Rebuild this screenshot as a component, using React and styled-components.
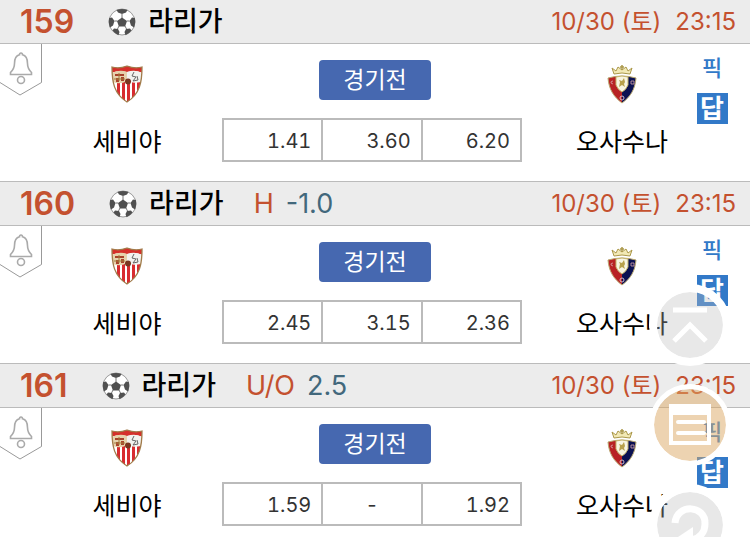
import React from 'react';
import styled, { createGlobalStyle } from 'styled-components';

const GlobalStyle = createGlobalStyle`
    * {
        box-sizing: border-box;
    }

    body {
        margin: 0;
        background-color: #fff;
        color: #000;
        font-family: Inter, "Noto Sans CJK KR", sans-serif;
        overflow-x: hidden;
    }

    button {
        padding: 0;
        font-family: inherit;
        cursor: pointer;
    }
`;

const Game = styled.section`
    &:not(:first-child) > header {
        border-top: 1px solid #bbb;
    }
`;

const GameHeader = styled.header`
    display: flex;
    align-items: center;
    padding: 0 14px 0 20px;
    background-color: #ececec;
    border-bottom: 1px solid #bbb;
    line-height: 43px;
    white-space: nowrap;
`;

const GameNumber = styled.span`
    margin-right: 34px;
    font-size: 32px;
    font-weight: 600;
    color: #c4512f;
`;

const League = styled.h2`
    margin: 0 0 0 12px;
    font-size: 27px;
    font-weight: 500;
    line-height: 43px;
`;

const Market = styled.span`
    margin-left: 30px;
    font-size: 27px;
    color: #c4512f;
`;

const Line = styled.span`
    margin-left: 12px;
    font-size: 27px;
    color: #42687c;
`;

const Kickoff = styled.time`
    display: flex;
    gap: 14px;
    margin-left: auto;
    font-size: 24px;
    color: #c4512f;
`;

const GameBody = styled.div`
    display: grid;
    grid-template-columns: 32px 190fr 306px 168fr 54px;
    height: 137px;
`;

const AlarmButton = styled.button`
    align-self: start;
    width: 42px;
    height: 53px;
    border: none;
    background: none;

    svg {
        display: block;
    }
`;

const Team = styled.div`
    display: flex;
    flex-direction: column;
    align-items: center;
    gap: 20px;
    padding-top: 20px;
    padding-left: ${(props) => (props.$away ? '20px' : '0')};
    font-size: 25px;
    line-height: 36px;
    white-space: nowrap;
`;

const Center = styled.div`
    display: flex;
    flex-direction: column;
    align-items: center;
    padding-top: 16px;
`;

const StatusButton = styled.button`
    width: 112px;
    height: 40px;
    border: none;
    border-radius: 4px;
    background-color: #4668b0;
    color: #fff;
    font-size: 23px;
    line-height: 40px;
`;

const Odds = styled.table`
    align-self: flex-start;
    width: 300px;
    margin-top: 18px;
    border-collapse: collapse;
    table-layout: fixed;

    td {
        height: 42px;
        padding: 2px 10px 0;
        border: 2px solid #bbb;
        color: #333;
        font-size: 20px;
        font-variant-numeric: tabular-nums;
        line-height: 24px;
        text-align: right;
    }

    td.empty {
        text-align: center;
    }
`;

const Picks = styled.div`
    display: flex;
    flex-direction: column;
    align-items: center;
    gap: 10px;
    width: 32px;
    padding-top: 9px;
`;

const PickButton = styled.button`
    border: none;
    background: none;
    color: #3279c8;
    font-size: 22px;
    font-weight: 500;
    line-height: 30px;
`;

const AnswerButton = styled.button`
    width: 31px;
    height: 31px;
    border: none;
    background-color: #3279c8;
    color: #fff;
    font-size: 26px;
    font-weight: 700;
    line-height: 30px;
`;

const FloatingMenu = styled.nav`
    position: fixed;
    top: 284px;
    right: 19px;
    display: flex;
    flex-direction: column;
    gap: 18px;
`;

const RoundButton = styled.button`
    width: 82px;
    height: 82px;
    border: ${(props) => (props.$accent ? '5px' : '8px')} solid #fff;
    border-radius: 50%;
    background-color: ${(props) => (props.$accent ? 'rgba(219, 167, 99, 0.5)' : 'rgba(189, 189, 189, 0.35)')};
    background-clip: padding-box;

    svg {
        display: block;
        margin: auto;
    }
`;

function BallIcon() {
    return (
        <svg width="28" height="28" viewBox="0 0 28 28" aria-hidden="true">
            <circle cx="14" cy="14" r="13" fill="#fff" stroke="#999" />
            <g fill="#505050">
                <path d="M14 9.500l5 3.500-1.900 5.500h-6.200L9 13z" />
                <path d="M8.500 2q5.500-2.200 11 0l-1.500 2.500-4 1.500L10 4.500z" />
                <path d="M1.200 10L4 9.500l2.500 3.500-1.500 4.500-3 2Q0 14 1.200 10z" />
                <path d="M26.800 10L24 9.500l-2.500 3.500 1.500 4.500 3 2Q28 14 26.800 10z" />
                <path d="M4.500 22.500L6 20.500l4 .5 1.500 3-1 3.200Q7 26 4.500 22.500z" />
                <path d="M23.500 22.500L22 20.500l-4 .5-1.500 3 1 3.200Q21 26 23.500 22.500z" />
            </g>
            <path d="M14 6v4M6.500 13H9M19 13h2.500M11 18l-1.500 3M17 18l1.500 3" stroke="#777" fill="none" />
        </svg>
    );
}

function AlarmIcon() {
    return (
        <svg width="42" height="53" viewBox="0 0 42 53" fill="none" aria-hidden="true">
            <path d="M41.500 0v38.500L20 51 0 38.500" stroke="#999" />
            <g stroke="#aaa" strokeWidth="1.600">
                <path d="M10.500 30.500v-2c3-3 4-5 4-9 0-5 2-8 5-8.700 0-2.500 3-2.500 3 0 3 .7 5 3.700 5 8.700 0 4 1 6 4 9v2z" />
                <circle cx="21" cy="36" r="3.500" />
            </g>
        </svg>
    );
}

function SevillaCrest() {
    return (
        <svg width="34" height="40" viewBox="0 0 34 40" role="img" aria-label="세비야">
            <clipPath id="sevilla">
                <path d="M2 3q7 2 15-1 8 3 15 1c0 15-2 27-15 35C4 30 2 18 2 3z" />
            </clipPath>
            <g clipPath="url(#sevilla)">
                <path d="M0 0h34v40H0z" fill="#fff" />
                <path d="M7 18h3v20H7zM12 18h3v20h-3zM17 18h3v20h-3zM22 18h3v20h-3zM27 18h3v20h-3z" fill="#d82c30" />
                <path d="M0 0h34v9q-9-3-17-1-8-2-17 1z" fill="#d5302b" />
                <path d="M2 9q8-4 15-1v9q-7 4-14 1z" fill="#e6d2ac" />
                <path d="M17 8q8-3 15 1l-1 9q-8 2-14-1z" fill="#f2f2ef" />
                <path d="M5 10h9v2H5zM6 14h3v4H6zM11 13h3v4h-3z" fill="#a8432b" />
                <path d="M9 9v8M4 15h11" stroke="#a17b3a" />
                <path d="M24 8l-2 4 4 1-3 4 5-1-1-4" fill="none" stroke="#666" />
                <circle cx="18" cy="17.500" r="3" fill="#7a3520" />
            </g>
            <path d="M2 3q7 2 15-1 8 3 15 1c0 15-2 27-15 35C4 30 2 18 2 3z" fill="none" stroke="#a17b4a" strokeWidth="1.300" />
        </svg>
    );
}

function OsasunaCrest() {
    return (
        <svg width="34" height="40" viewBox="0 0 34 40" role="img" aria-label="오사수나">
            <path d="M9 10L7 4l4 3 2-4 4 3 4-3 2 4 4-3-2 6q-8-2-16 0z" fill="#f2e9b5" stroke="#ab984a" />
            <path d="M17 1v5M15 3h4" stroke="#ab984a" strokeWidth="1.500" />
            <clipPath id="osasuna">
                <path d="M3 14q7-2 14-2t14 2c-1 12-6 19-14 25C9 33 4 26 3 14z" />
            </clipPath>
            <g clipPath="url(#osasuna)">
                <path d="M0 8h17v32H0z" fill="#b82224" />
                <path d="M17 8h17v32H17z" fill="#0b1152" />
            </g>
            <path d="M3 14q7-2 14-2t14 2c-1 12-6 19-14 25C9 33 4 26 3 14z" fill="none" stroke="#b9a870" />
            <path d="M11 13q6-2 12 0v8q-2 5-6 7-4-2-6-7z" fill="#f8f5e2" stroke="#c5b36a" />
            <path d="M14 23l1-5-1-2 3 1 2-3 1 4-1 2 1 3-3-2z" fill="#b8a14c" />
            <path d="M8 17q-2.500 0-2 2l2 1M26 17h3v3h-3z" fill="none" stroke="#d9a5ab" strokeWidth=".8" />
            <circle cx="17" cy="34" r="2" fill="none" stroke="#d6b9c8" />
        </svg>
    );
}

function TopIcon() {
    return (
        <svg width="40" height="42" viewBox="0 0 40 42" fill="none" stroke="#fff" aria-hidden="true">
            <path d="M3 6h34" strokeWidth="5" />
            <path d="M4 37l16-16 16 16" strokeWidth="5" />
        </svg>
    );
}

function ListIcon() {
    return (
        <svg width="42" height="42" viewBox="0 0 42 42" fill="none" stroke="#fff" strokeWidth="4" aria-hidden="true">
            <path d="M2 2h38v37H2z" />
            <path d="M2 2h38v7H2z" fill="#fff" />
            <path d="M9 18h26M9 29h26" strokeLinecap="round" />
        </svg>
    );
}

function RefreshIcon() {
    return (
        <svg width="44" height="44" viewBox="0 0 44 44" fill="none" stroke="#fff" strokeWidth="7" aria-hidden="true">
            <path d="M7 20C9 0 38 2 37 21c0 8-5 14-13 16" />
            <path d="M25 24L7 36l18 8z" fill="#fff" stroke="none" />
        </svg>
    );
}

const games = [
    { number: 159, odds: ['1.41', '3.60', '6.20'] },
    { number: 160, market: 'H', line: '-1.0', odds: ['2.45', '3.15', '2.36'] },
    { number: 161, market: 'U/O', line: '2.5', odds: ['1.59', '-', '1.92'] },
];

function GameCard({ game }) {
    return (
        <Game>
            <GameHeader>
                <GameNumber>{game.number}</GameNumber>
                <BallIcon />
                <League>라리가</League>
                {game.market && <Market>{game.market}</Market>}
                {game.line && <Line>{game.line}</Line>}
                <Kickoff>
                    <span>10/30 (토)</span>
                    <span>23:15</span>
                </Kickoff>
            </GameHeader>
            <GameBody>
                <AlarmButton aria-label="알림">
                    <AlarmIcon />
                </AlarmButton>
                <Team>
                    <SevillaCrest />
                    <span>세비야</span>
                </Team>
                <Center>
                    <StatusButton>경기전</StatusButton>
                    <Odds>
                        <tbody>
                            <tr>
                                {game.odds.map((odd, index) => (
                                    <td key={index} className={odd === '-' ? 'empty' : undefined}>{odd}</td>
                                ))}
                            </tr>
                        </tbody>
                    </Odds>
                </Center>
                <Team $away>
                    <OsasunaCrest />
                    <span>오사수나</span>
                </Team>
                <Picks>
                    <PickButton>픽</PickButton>
                    <AnswerButton>답</AnswerButton>
                </Picks>
            </GameBody>
        </Game>
    );
}

export default function App() {
    return (
        <>
            <GlobalStyle />
            <main>
                {games.map((game) => (
                    <GameCard key={game.number} game={game} />
                ))}
            </main>
            <FloatingMenu>
                <RoundButton aria-label="맨 위로">
                    <TopIcon />
                </RoundButton>
                <RoundButton $accent aria-label="목록">
                    <ListIcon />
                </RoundButton>
                <RoundButton aria-label="새로고침">
                    <RefreshIcon />
                </RoundButton>
            </FloatingMenu>
        </>
    );
}
